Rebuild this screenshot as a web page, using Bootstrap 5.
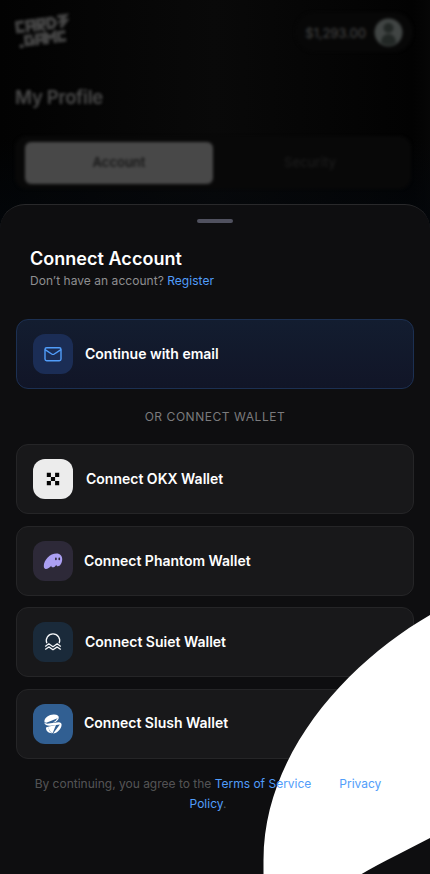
<!DOCTYPE html>
<html lang="en" data-bs-theme="dark">
<head>
<meta charset="utf-8">
<meta name="viewport" content="width=device-width, initial-scale=1">
<title>Connect Account</title>
<link rel="stylesheet" href="https://cdn.jsdelivr.net/npm/bootstrap@5.3.0/dist/css/bootstrap.min.css">
<style>
body{font-family:Inter,"Liberation Sans",sans-serif;background:#030303;height:874px}
.screen{width:430px;height:874px}
.backdrop-page{height:230px;padding:12px 17px 0 15px;background:linear-gradient(180deg,rgba(3,7,12,0) 60%,rgba(3,7,12,.8)),linear-gradient(90deg,#020202,#090909 50%,#020202 96%,#060606)}
.soft{filter:blur(1.4px)}
.balance{height:40px;width:118px;border-radius:20px;background:#070707;color:#3d3d3d;font-size:13px;font-weight:500;padding-right:10px;gap:8px;letter-spacing:-.15px}
.balance span{padding-top:3px}
.profile-title{font-size:18.5px;line-height:24px;font-weight:600;color:#4c4c4c;margin-top:32px;letter-spacing:-.3px}
.tabs{height:53px;width:396px;margin-top:27px;border-radius:12px;background:#080808;padding:5px 10px;font-size:13px;font-weight:500}
.tab-on{width:188px;height:42px;border-radius:6px;background:#484848;color:#171717;font-weight:600}
.tab-off{color:#1b1b1b;padding-left:6px}
.sheet{top:204px;height:670px;padding:0 16px;background:#0e0e10;border-top:1px solid #29292b;border-radius:25px 25px 0 0;overflow:hidden}
.grabber{width:36px;height:4px;border-radius:2px;background:#50515f;margin-top:14px}
.intro{margin:25px 14px 0}
.sheet-title{font-size:18px;line-height:22px;font-weight:600;color:#fff;letter-spacing:.03px}
.sheet-sub{font-size:12px;line-height:16px;color:#8e8e90;margin-top:3px;letter-spacing:.04px}
.blue,.blue:hover{color:#519dfa;text-decoration:none}
.option{height:70px;border:1px solid #252527;border-radius:12px;background:#18181a;color:#fff;font-size:14px;font-weight:600;padding:0 16px;gap:12px}
.option-email{margin-top:30px;border-color:#1c3052;background:linear-gradient(180deg,#131d30,#111527)}
.option-label{padding-bottom:1.5px}
.option-icon{width:40px;height:40px;border-radius:12px;flex:none}
.gap-wide{gap:13px}.gap-tight{gap:11px}
.i-mail{background:#1b2d55}.i-okx{background:#ececec}.i-phantom{background:#2d2938}.i-suiet{background:#1a2a3a}.i-slush{background:#315f92}
.divider-label{height:55px;font-size:12px;color:#7b7b7d;letter-spacing:.55px}
.wallets{gap:11.4px;padding-top:.4px}
.terms{font-size:12px;line-height:20px;color:rgba(255,255,255,.3);margin-top:15.6px;padding-right:14px}
.blob{left:0;top:0;z-index:1}
.over{z-index:2}
</style>
</head>
<body>
<main class="screen position-relative overflow-hidden">
  <header class="backdrop-page">
    <div class="soft">
      <div class="d-flex justify-content-between">
        <svg width="54" height="41" viewBox="0 0 54 41" fill="none" stroke="#454545" stroke-width="3.4" aria-label="Cardz Game">
          <g transform="translate(-1 5) rotate(-7 0 8)">
            <path d="M10 6H3v9h7M13 17V6h7v11M13 11.500h7M24 17V6h6v5h-6l6 6M34 6h4l3 3v3l-3 3h-4zM44 5h8l-5 5h5l-6 6"/>
            <path d="M17 21h-7v8h7v-4h-3M21 31V21h7v10M21 26h7M31 31V21l4 4 4-4v10M50 21h-7v8h7M3 30h4"/>
          </g>
        </svg>
        <div class="balance d-flex align-items-center justify-content-end">
          <span>$1,293.00</span>
          <svg width="29" height="29" viewBox="0 0 29 29"><circle cx="14.5" cy="14.5" r="14" fill="#414544"/><circle cx="14.5" cy="10" r="5" fill="#222725"/><path d="M7 25c0-12 15-12 15 0q-7 5-15 0" fill="#222725"/></svg>
        </div>
      </div>
      <h1 class="profile-title mb-0">My Profile</h1>
      <div class="tabs d-flex align-items-center">
        <div class="tab-on d-flex align-items-center justify-content-center">Account</div>
        <div class="tab-off flex-fill text-center">Security</div>
      </div>
    </div>
  </header>

  <section class="sheet position-absolute start-0 w-100">
    <div class="grabber mx-auto"></div>
    <div class="intro">
      <h2 class="sheet-title mb-0">Connect Account</h2>
      <p class="sheet-sub mb-0">Don’t have an account? <a class="blue" href="#">Register</a></p>
    </div>
    <a href="#" class="option option-email d-flex align-items-center text-decoration-none">
      <span class="option-icon i-mail d-flex align-items-center justify-content-center">
        <svg width="20" height="20" viewBox="0 0 20 20" fill="none" stroke="#519dfa" stroke-width="1.4" stroke-linecap="round" stroke-linejoin="round"><rect x="2" y="3.7" width="16" height="13" rx="1.7"/><path d="m2.400 5.800 6.300 4.200q1.300.8 2.600 0l6.300-4.200"/></svg>
      </span><span class="option-label">Continue with email</span>
    </a>
    <div class="divider-label d-flex align-items-center justify-content-center">OR CONNECT WALLET</div>
    <div class="wallets d-flex flex-column">
      <a href="#" class="option gap-wide d-flex align-items-center text-decoration-none">
        <span class="option-icon i-okx d-flex align-items-center justify-content-center">
          <svg width="14" height="14" viewBox="0 0 14 14" fill="#050505"><path d="M.8.8h4.100v4.100H.8zM9.100.8h4.100v4.100H9.100zM4.900 4.900h4.200v4.200H4.900zM.8 9.100h4.100v4.100H.8zM9.100 9.100h4.100v4.100H9.100z"/></svg>
        </span><span class="option-label">Connect OKX Wallet</span>
      </a>
      <a href="#" class="option gap-tight d-flex align-items-center text-decoration-none">
        <span class="option-icon i-phantom d-flex align-items-center justify-content-center">
          <svg width="20" height="18" viewBox="0 0 20 18"><path d="M.8 14C.8 8 7 1.500 13.500 1.500c3.800 0 5.700 2.500 5.700 5.700 0 3.600-2 7-4.300 7-1.100 0-1.600-.7-1.500-1.500-1 1.700-2.300 2.600-3.500 2.600-1.100 0-1.600-.7-1.600-1.600C6.700 15.500 4.600 16.900 3 16.900S.8 15.600.8 14" fill="#ab9ff2"/><ellipse cx="12.900" cy="6.900" rx=".9" ry="1.400" fill="#2d2938"/><ellipse cx="16.300" cy="6.900" rx=".9" ry="1.400" fill="#2d2938"/></svg>
        </span><span class="option-label">Connect Phantom Wallet</span>
      </a>
      <a href="#" class="option d-flex align-items-center text-decoration-none">
        <span class="option-icon i-suiet d-flex align-items-center justify-content-center">
          <svg width="18" height="18" viewBox="0 0 18 18" fill="none" stroke="#f4f6f8" stroke-width="1.300" stroke-linejoin="round"><path d="M2.800 10.200A6.700 6.700 0 1 1 15.200 10.200"/><path d="m1.200 13.500 3.600-2.700L9 13.700l4.200-2.900 3.600 2.700M1.200 16.600l3.600-2.700L9 16.800l4.200-2.900 3.600 2.700"/></svg>
        </span><span class="option-label">Connect Suiet Wallet</span>
      </a>
      <a href="#" class="option gap-tight d-flex align-items-center text-decoration-none">
        <span class="option-icon i-slush d-flex align-items-center justify-content-center">
          <svg width="20" height="20" viewBox="0 0 20 20" fill="#fff"><path d="M1.400 7C1.800 3.500 6 .7 10.500.5c3.800-.2 5.500 1.300 5.300 3.200L3.300 8.700C2 8.500 1.300 8 1.400 7"/><path d="M1.200 8.500q1 1.300 4.300 1.100l10-1.300c2-.1 3.100.8 3.100 2.500 0 4-4.500 8.700-8.500 8.700l6.800-9.100-9.400 1.300Q2.200 12 1.200 8.500"/><path d="M15.800 3.700c-.2 1.700-1.500 3-3.200 4.300l-3 .4c2-.8 4-2.200 4.400-4"/><path d="M3 13.500l3-1.100c-.8 2.600.3 5.500 3.500 6.800C5.700 19.600 2.700 16.800 3 13.500"/><path d="M6 12.400l7-1.500-3.300 8.200C6.800 18 5.300 15.300 6 12.400"/></svg>
        </span><span class="option-label">Connect Slush Wallet</span>
      </a>
    </div>
    <p class="terms over position-relative text-center mb-0">By continuing, you agree to the <a class="blue" href="#">Terms of Service</a> and <a class="blue" href="#">Privacy<br>Policy</a>.</p>
    <svg class="blob position-absolute" width="430" height="670" viewBox="0 205 430 670" fill="#fff"><path d="M430 615C350 661 263.500 752 263.500 860V875H360Q375 866 397 855L430 838Z"/></svg>
  </section>
</main>
<script src="https://cdn.jsdelivr.net/npm/bootstrap@5.3.0/dist/js/bootstrap.bundle.min.js"></script>
</body>
</html>
